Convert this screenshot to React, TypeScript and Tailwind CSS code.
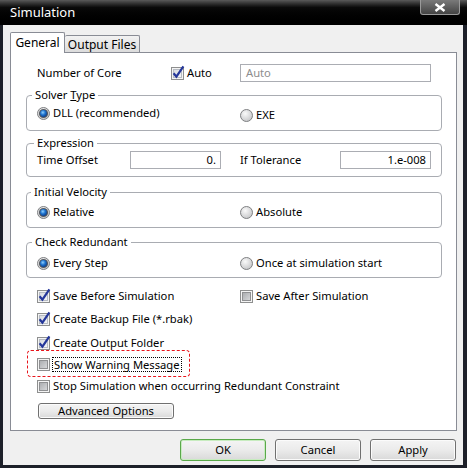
import type { ReactNode } from 'react';

const font = "font-['Noto_Sans',sans-serif]";

function Defs() {
  return (
    <svg width="0" height="0" className="absolute">
      <defs>
        <linearGradient id="cbOn" x1="0" y1="0" x2="1" y2="1">
          <stop offset="0" stopColor="#d6d9de" />
          <stop offset="1" stopColor="#f6f7f8" />
        </linearGradient>
        <linearGradient id="cbOff" x1="0" y1="0" x2="1" y2="1">
          <stop offset="0" stopColor="#a9abae" />
          <stop offset="1" stopColor="#d9dadc" />
        </linearGradient>
        <radialGradient id="rdOff" cx="0.4" cy="0.35" r="0.7">
          <stop offset="0" stopColor="#fafafa" />
          <stop offset="1" stopColor="#c4c5c7" />
        </radialGradient>
        <radialGradient id="rdDot" cx="0.4" cy="0.35" r="0.7">
          <stop offset="0" stopColor="#8fd0ff" />
          <stop offset="0.5" stopColor="#1e74d0" />
          <stop offset="1" stopColor="#0b3c8c" />
        </radialGradient>
      </defs>
    </svg>
  );
}

function CheckBox({ checked }: { checked?: boolean }) {
  return (
    <svg width="13" height="13" viewBox="0 0 13 13" className="shrink-0 overflow-visible">
      <rect x="0.5" y="0.5" width="12" height="12" fill="#f4f4f4" stroke="#8e8f8f" />
      <rect x="2.5" y="2.5" width="8" height="8" fill={checked ? 'url(#cbOn)' : 'url(#cbOff)'} stroke={checked ? '#b7bcc4' : '#8f9092'} />
      {checked && (
        <path d="M2.6 6.2 L5.4 9.6 L12.4 -0.6" stroke="#25379a" strokeWidth="2.2" fill="none" strokeLinejoin="miter" />
      )}
    </svg>
  );
}

function Radio({ checked }: { checked?: boolean }) {
  return (
    <svg width="13" height="13" viewBox="0 0 13 13" className="shrink-0">
      <circle cx="6.5" cy="6.5" r="6" fill="url(#rdOff)" stroke="#7f8183" />
      {checked && (
        <>
          <circle cx="6.5" cy="6.5" r="4.6" fill="#555a60" />
          <circle cx="6.5" cy="6.5" r="3.4" fill="url(#rdDot)" />
        </>
      )}
    </svg>
  );
}

function Group({
  label,
  labelLeft,
  className,
  children,
}: {
  label: ReactNode;
  labelLeft: string;
  className: string;
  children: ReactNode;
}) {
  return (
    <div className={`relative ml-[15px] mr-[14px] flex items-center rounded-[4px] border border-[#a9acb2] pl-[10px] ${className}`}>
      <span className={`absolute top-[-9px] ${labelLeft} bg-white px-[3px] leading-[16px]`}>{label}</span>
      {children}
    </div>
  );
}

function Option({ radio, checked, children, className = '' }: { radio?: boolean; checked?: boolean; children: ReactNode; className?: string }) {
  return (
    <div className={`flex items-center gap-[3px] ${className}`}>
      {radio ? <Radio checked={checked} /> : <CheckBox checked={checked} />}
      <span className="leading-[16px]">{children}</span>
    </div>
  );
}

function Btn({ children, primary, className = '' }: { children: ReactNode; primary?: boolean; className?: string }) {
  return (
    <div
      className={`flex items-center justify-center rounded-[3px] border bg-gradient-to-b from-[#f4f4f4] via-[#ebebeb] to-[#d9d9d9] ${
        primary ? 'border-[#5aa84a] shadow-[inset_0_0_0_1px_#c8ecc0]' : 'border-[#707070] shadow-[inset_0_0_0_1px_#fbfbfb]'
      } ${className}`}
    >
      {children}
    </div>
  );
}

export default function App() {
  return (
    <div className={`${font} flex h-[468px] w-[467px] flex-col bg-[#1d2029] text-[11.2px] text-black`}>
      <Defs />
      {/* title bar */}
      <div className="relative flex h-[25px] shrink-0 items-center bg-gradient-to-b from-[#5a5a5a] via-[#0a0a0a] via-30% to-black pl-[10px]">
        <span className="text-[13px] leading-none text-white">Simulation</span>
        <div className="absolute right-[7px] top-0 flex h-[15px] w-[40px] items-center justify-center rounded-b-[3px] border border-t-0 border-[#9a9a9a] bg-gradient-to-b from-[#7a7a7a] to-[#444]">
          <svg width="12" height="9" viewBox="0 0 12 9">
            <path d="M1.5 1 L10.5 8 M10.5 1 L1.5 8" stroke="#fff" strokeWidth="2.4" />
          </svg>
        </div>
      </div>

      {/* body */}
      <div className="ml-[3px] mr-[4px] flex h-[440px] flex-col bg-[#f0f0f0] pl-[7px] pr-[6px] pt-[7px]">
        {/* tabs */}
        <div className="relative z-10 flex h-[21px] items-end">
          <div className="flex h-[21px] w-[55px] items-start justify-center rounded-t-[2px] border border-b-0 border-[#898c95] bg-white pt-[2px] text-[12px] leading-[16px]">
            General
          </div>
          <div className="mb-[1px] flex h-[17px] w-[75px] items-center justify-center rounded-t-[2px] border border-b-0 border-l-0 border-[#898c95] bg-gradient-to-b from-[#f2f2f2] to-[#dcdcdc] pt-px text-[12px] leading-[16px]">
            Output Files
          </div>
        </div>

        {/* panel */}
        <div className="-mt-px flex h-[379px] flex-col border border-[#898c95] bg-white">
          <div className="mt-[11px] flex h-[18px] items-center pl-[26px]">
            <span className="w-[134px]">Number of Core</span>
            <Option checked className="w-[69px]">Auto</Option>
            <div className="flex h-[18px] w-[191px] items-center border border-[#abadb3] pl-[5px] text-[#8d8d8d]">Auto</div>
          </div>

          <Group
            className="mt-[13px] h-[36px]"
            labelLeft="left-[5px]"
            label={
              <>
                Solver <span className="underline">T</span>ype
              </>
            }
          >
            <Option radio checked className="w-[203px]">DLL (recommended)</Option>
            <Option radio className="mt-[4px]">EXE</Option>
          </Group>

          <Group className="mt-[12px] h-[34px]" labelLeft="left-[7px]" label="Expression">
            <span className="w-[93px]">Time Offset</span>
            <div className="flex h-[18px] w-[91px] items-center justify-end border border-[#abadb3] pr-[4px]">0.</div>
            <span className="ml-[19px] w-[100px]">If Tolerance</span>
            <div className="flex h-[18px] w-[91px] items-center justify-end border border-[#abadb3] pr-[4px]">1.e-008</div>
          </Group>

          <Group className="mt-[15px] h-[36px] pt-[4px]" labelLeft="left-[4px]" label="Initial Velocity">
            <Option radio checked className="w-[203px]">Relative</Option>
            <Option radio>Absolute</Option>
          </Group>

          <Group className="mt-[14px] h-[36px] pt-[6px]" labelLeft="left-[5px]" label="Check Redundant">
            <Option radio checked className="w-[203px]">Every Step</Option>
            <Option radio>Once at simulation start</Option>
          </Group>

          <div className="mt-[8px] flex h-[20px] items-center pl-[26px]">
            <Option checked className="w-[203px]">Save Before Simulation</Option>
            <Option>Save After Simulation</Option>
          </div>
          <div className="mt-[3px] flex h-[20px] items-center pl-[26px]">
            <Option checked>Create Backup File (*.rbak)</Option>
          </div>
          <div className="mt-[4px] flex h-[20px] items-center pl-[26px]">
            <Option checked>Create Output Folder</Option>
          </div>
          <div className="mt-[1px] flex h-[20px] items-center pl-[26px]">
            <div className="relative flex items-center gap-[2px]">
              <CheckBox />
              <span className="border border-dotted border-black px-px leading-[13px]">Show Warning Message</span>
              <div className="absolute left-[-10px] top-[-7px] h-[27px] w-[163px] rounded-[4px] border border-dashed border-[#e8141b]" />
            </div>
          </div>
          <div className="mt-[2px] flex h-[20px] items-center pl-[26px]">
            <Option>Stop Simulation when occurring Redundant Constraint</Option>
          </div>

          <div className="mt-[7px] pl-[27px]">
            <Btn className="h-[16px] w-[136px] leading-none">Advanced Options</Btn>
          </div>
        </div>

        {/* footer buttons */}
        <div className="mt-[8px] flex justify-end gap-[9px] pr-px">
          <Btn primary className="h-[22px] w-[86px]">OK</Btn>
          <Btn className="h-[22px] w-[86px]">Cancel</Btn>
          <Btn className="h-[22px] w-[86px]">Apply</Btn>
        </div>
      </div>
    </div>
  );
}
